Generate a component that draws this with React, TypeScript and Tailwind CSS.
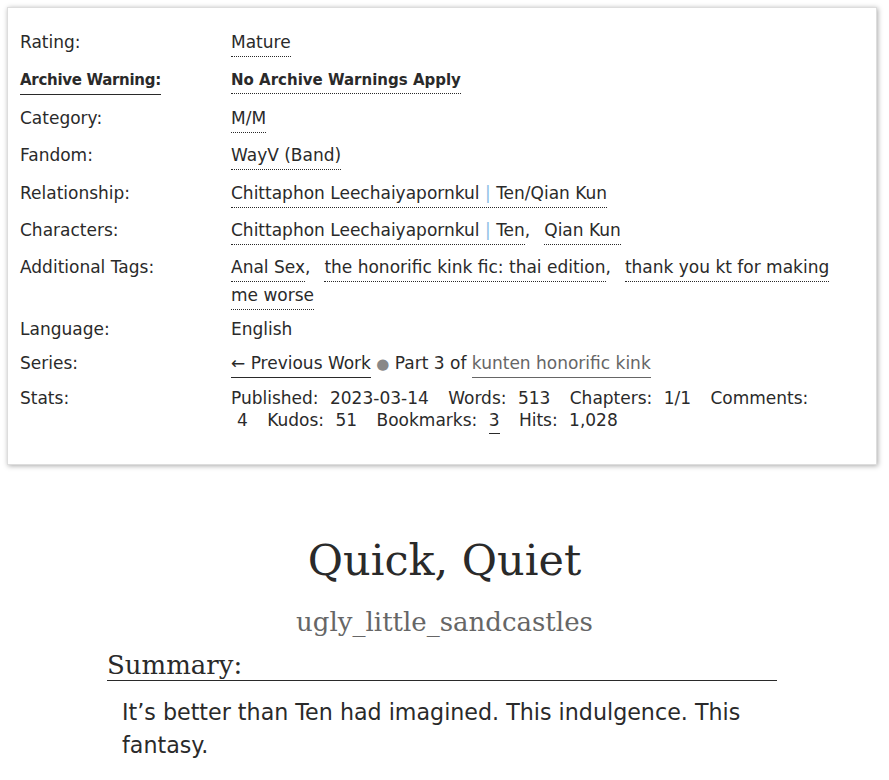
import React from "react";

type Tag = { text: React.ReactNode; bold?: boolean };

const sans = { fontFamily: '"DejaVu Sans", "Lucida Grande", Verdana, sans-serif' };
const serif = { fontFamily: '"DejaVu Serif", Georgia, serif' };

function Pipe() {
  return <span className="text-[#8dbde6]"> | </span>;
}

function TagLink({ children, bold }: { children: React.ReactNode; bold?: boolean }) {
  return (
    <span
      className={`border-b border-dotted border-[#2a2a2a] pb-[4px] ${
        bold ? "font-bold text-[15px]" : ""
      }`}
    >
      {children}
    </span>
  );
}

function TagList({ tags }: { tags: Tag[] }) {
  return (
    <>
      {tags.map((tag, i) => (
        <span key={i}>
          <TagLink bold={tag.bold}>{tag.text}</TagLink>
          {i < tags.length - 1 && <span className="mr-[14px]">,</span>}
        </span>
      ))}
    </>
  );
}

function Row({
  label,
  children,
  labelClass = "",
  className = "mb-[9.4px]",
}: {
  label: string;
  children: React.ReactNode;
  labelClass?: string;
  className?: string;
}) {
  return (
    <>
      <dt className={`${className} leading-[28px]`}>
        <span className={labelClass}>{label}</span>
      </dt>
      <dd className={`${className} leading-[28px]`}>{children}</dd>
    </>
  );
}

function Stat({ label, value, last }: { label: string; value: React.ReactNode; last?: boolean }) {
  return (
    <>
      <span>{label}</span>{" "}
      <span className={`ml-[6px] ${last ? "" : "mr-[14px]"}`}>{value}</span>{" "}
    </>
  );
}

export default function App() {
  return (
    <div className="bg-white min-h-screen text-[#2a2a2a]" style={sans}>
      <div className="pt-[7px] pl-[7px] pr-[12px]">
        <div className="bg-white border border-[#ddd] shadow-[1px_1px_5px_#aaa] pl-[12px] pt-[20px] h-[458px]">
          <dl className="grid grid-cols-[211px_605px] text-[17px]">
            <Row label="Rating:">
              <TagList tags={[{ text: "Mature" }]} />
            </Row>
            <Row
              label="Archive Warning:"
              labelClass="font-bold text-[15px] tracking-[-0.3px] border-b border-solid border-[#2a2a2a] pb-[5px]"
            >
              <TagList tags={[{ text: "No Archive Warnings Apply", bold: true }]} />
            </Row>
            <Row label="Category:">
              <TagList tags={[{ text: "M/M" }]} />
            </Row>
            <Row label="Fandom:">
              <TagList tags={[{ text: "WayV (Band)" }]} />
            </Row>
            <Row label="Relationship:">
              <TagList
                tags={[
                  {
                    text: (
                      <>
                        Chittaphon Leechaiyapornkul
                        <Pipe />
                        Ten/Qian Kun
                      </>
                    ),
                  },
                ]}
              />
            </Row>
            <Row label="Characters:">
              <TagList
                tags={[
                  {
                    text: (
                      <>
                        Chittaphon Leechaiyapornkul
                        <Pipe />
                        Ten
                      </>
                    ),
                  },
                  { text: "Qian Kun" },
                ]}
              />
            </Row>
            <Row label="Additional Tags:" className="mb-[6px]">
              <TagList
                tags={[
                  { text: "Anal Sex" },
                  { text: "the honorific kink fic: thai edition" },
                  { text: "thank you kt for making me worse" },
                ]}
              />
            </Row>
            <Row label="Language:" className="mb-[6px]">
              English
            </Row>
            <Row label="Series:" className="mb-[6px]">
              <span className="border-b border-solid border-[#2a2a2a] pb-[4px]">
                ← Previous Work
              </span>{" "}
              <span className="text-[#888] text-[15px]">●</span> Part 3 of{" "}
              <span className="text-[#666] border-b border-solid border-[#666] pb-[4px]">
                kunten honorific kink
              </span>
            </Row>
            <dt className="leading-[22px] pt-[3px]">Stats:</dt>
            <dd className="leading-[22px] pt-[3px]">
              <Stat label="Published:" value="2023-03-14" />
              <Stat label="Words:" value="513" />
              <Stat label="Chapters:" value="1/1" />
              <Stat label="Comments:" value="4" />
              <Stat label="Kudos:" value="51" />
              <Stat
                label="Bookmarks:"
                value={<span className="border-b border-solid border-[#2a2a2a] pb-[3px]">3</span>}
              />
              <Stat label="Hits:" value="1,028" last />
            </dd>
          </dl>
        </div>
      </div>

      <div className="mt-[69px] text-center" style={serif}>
        <h2 className="text-[43px] leading-[52px] text-[#2a2a2a]">Quick, Quiet</h2>
        <h3 className="mt-[19px] text-[26px] leading-[34px] text-[#666]">ugly_little_sandcastles</h3>
      </div>

      <div className="ml-[107px] mr-[112px] mt-[11px]">
        <h3 className="text-[26px] leading-[30px] border-b border-[#2a2a2a]" style={serif}>
          Summary:
        </h3>
        <blockquote className="ml-[15px] mt-[15px] text-[22.2px] leading-[33px] text-[#2a2a2a]">
          It’s better than Ten had imagined. This indulgence. This fantasy.
        </blockquote>
      </div>
    </div>
  );
}
